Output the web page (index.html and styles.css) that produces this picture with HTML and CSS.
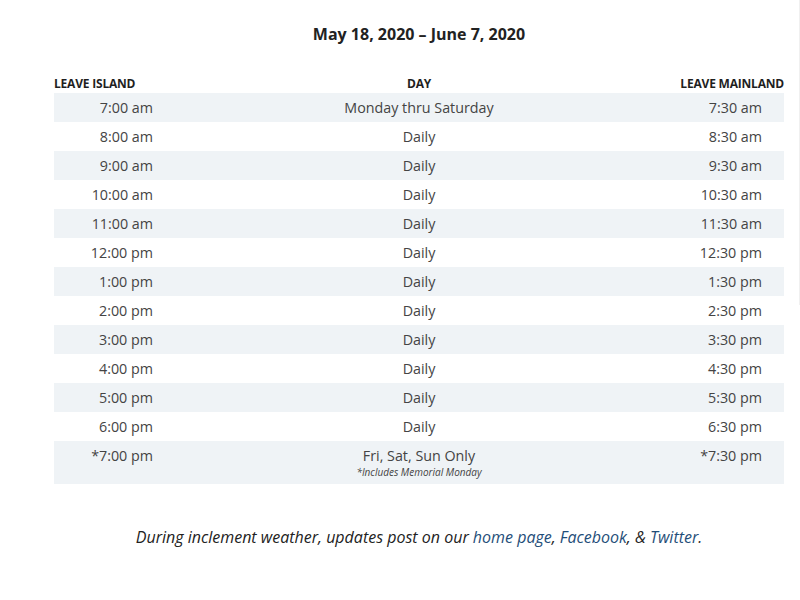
FILE: index.html
```html
<!DOCTYPE html>
<html lang="en">
<head>
<meta charset="utf-8">
<title>Ferry Schedule</title>
<link rel="stylesheet" href="styles.css">
</head>
<body>
<div class="edge"></div>
<main class="wrap">
  <h2 class="title">May 18, 2020 – June 7, 2020</h2>
  <table class="sched">
    <colgroup>
      <col class="col-side">
      <col class="col-mid">
      <col class="col-side">
    </colgroup>
    <thead>
      <tr>
        <th class="c1">LEAVE ISLAND</th>
        <th class="c2">DAY</th>
        <th class="c3">LEAVE MAINLAND</th>
      </tr>
    </thead>
    <tbody>
      <tr><td class="c1">7:00 am</td><td class="c2">Monday thru Saturday</td><td class="c3">7:30 am</td></tr>
      <tr><td class="c1">8:00 am</td><td class="c2">Daily</td><td class="c3">8:30 am</td></tr>
      <tr><td class="c1">9:00 am</td><td class="c2">Daily</td><td class="c3">9:30 am</td></tr>
      <tr><td class="c1">10:00 am</td><td class="c2">Daily</td><td class="c3">10:30 am</td></tr>
      <tr><td class="c1">11:00 am</td><td class="c2">Daily</td><td class="c3">11:30 am</td></tr>
      <tr><td class="c1">12:00 pm</td><td class="c2">Daily</td><td class="c3">12:30 pm</td></tr>
      <tr><td class="c1">1:00 pm</td><td class="c2">Daily</td><td class="c3">1:30 pm</td></tr>
      <tr><td class="c1">2:00 pm</td><td class="c2">Daily</td><td class="c3">2:30 pm</td></tr>
      <tr><td class="c1">3:00 pm</td><td class="c2">Daily</td><td class="c3">3:30 pm</td></tr>
      <tr><td class="c1">4:00 pm</td><td class="c2">Daily</td><td class="c3">4:30 pm</td></tr>
      <tr><td class="c1">5:00 pm</td><td class="c2">Daily</td><td class="c3">5:30 pm</td></tr>
      <tr><td class="c1">6:00 pm</td><td class="c2">Daily</td><td class="c3">6:30 pm</td></tr>
      <tr class="last"><td class="c1">*7:00 pm</td><td class="c2">Fri, Sat, Sun Only<span class="note">*Includes Memorial Monday</span></td><td class="c3">*7:30 pm</td></tr>
    </tbody>
  </table>
  <p class="footer">During inclement weather, updates post on our <a href="#">home page</a>, <a href="#">Facebook</a>, &amp; <a href="#">Twitter</a>.</p>
</main>
</body>
</html>
```
FILE: styles.css
```css
html, body {
  margin: 0;
  padding: 0;
  background: #ffffff;
}
body {
  font-family: "Open Sans", "Liberation Sans", sans-serif;
  color: #444444;
  position: relative;
  min-height: 600px;
}
.edge {
  position: absolute;
  right: 0;
  top: 0;
  width: 1px;
  height: 305px;
  background: #f0f0f0;
}
.wrap {
  width: 730px;
  padding: 22px 0 0 54px;
}
.title {
  margin: 0 0 28px;
  font-size: 16px;
  line-height: 24px;
  font-weight: 700;
  color: #222222;
  text-align: center;
}
.sched {
  width: 730px;
  table-layout: fixed;
  border-collapse: collapse;
  border-spacing: 0;
}
.col-side { width: 121px; }
.sched th {
  font-size: 12px;
  font-weight: 700;
  color: #1f1f1f;
  line-height: 19px;
  padding: 0;
  letter-spacing: -0.2px;
  white-space: nowrap;
}
.sched th.c1 { text-align: left; }
.sched th.c2 { text-align: center; }
.sched th.c3 { text-align: right; }
.sched td {
  font-size: 14.3px;
  line-height: 21px;
  padding: 4px 0;
  vertical-align: top;
}
.sched td.c1, .sched td.c3 {
  text-align: right;
  padding-right: 22px;
}
.sched td.c2 { text-align: center; }
.sched tbody tr:nth-child(odd) { background: #eff3f6; }
.sched tr.last td { padding-bottom: 5px; }
.note {
  display: block;
  font-size: 10px;
  line-height: 13px;
  font-style: italic;
}
.footer {
  margin: 41px 0 0;
  font-size: 16px;
  line-height: 24px;
  font-style: italic;
  color: #222222;
  text-align: center;
}
.footer a {
  color: #1f4e79;
  text-decoration: none;
}
```
